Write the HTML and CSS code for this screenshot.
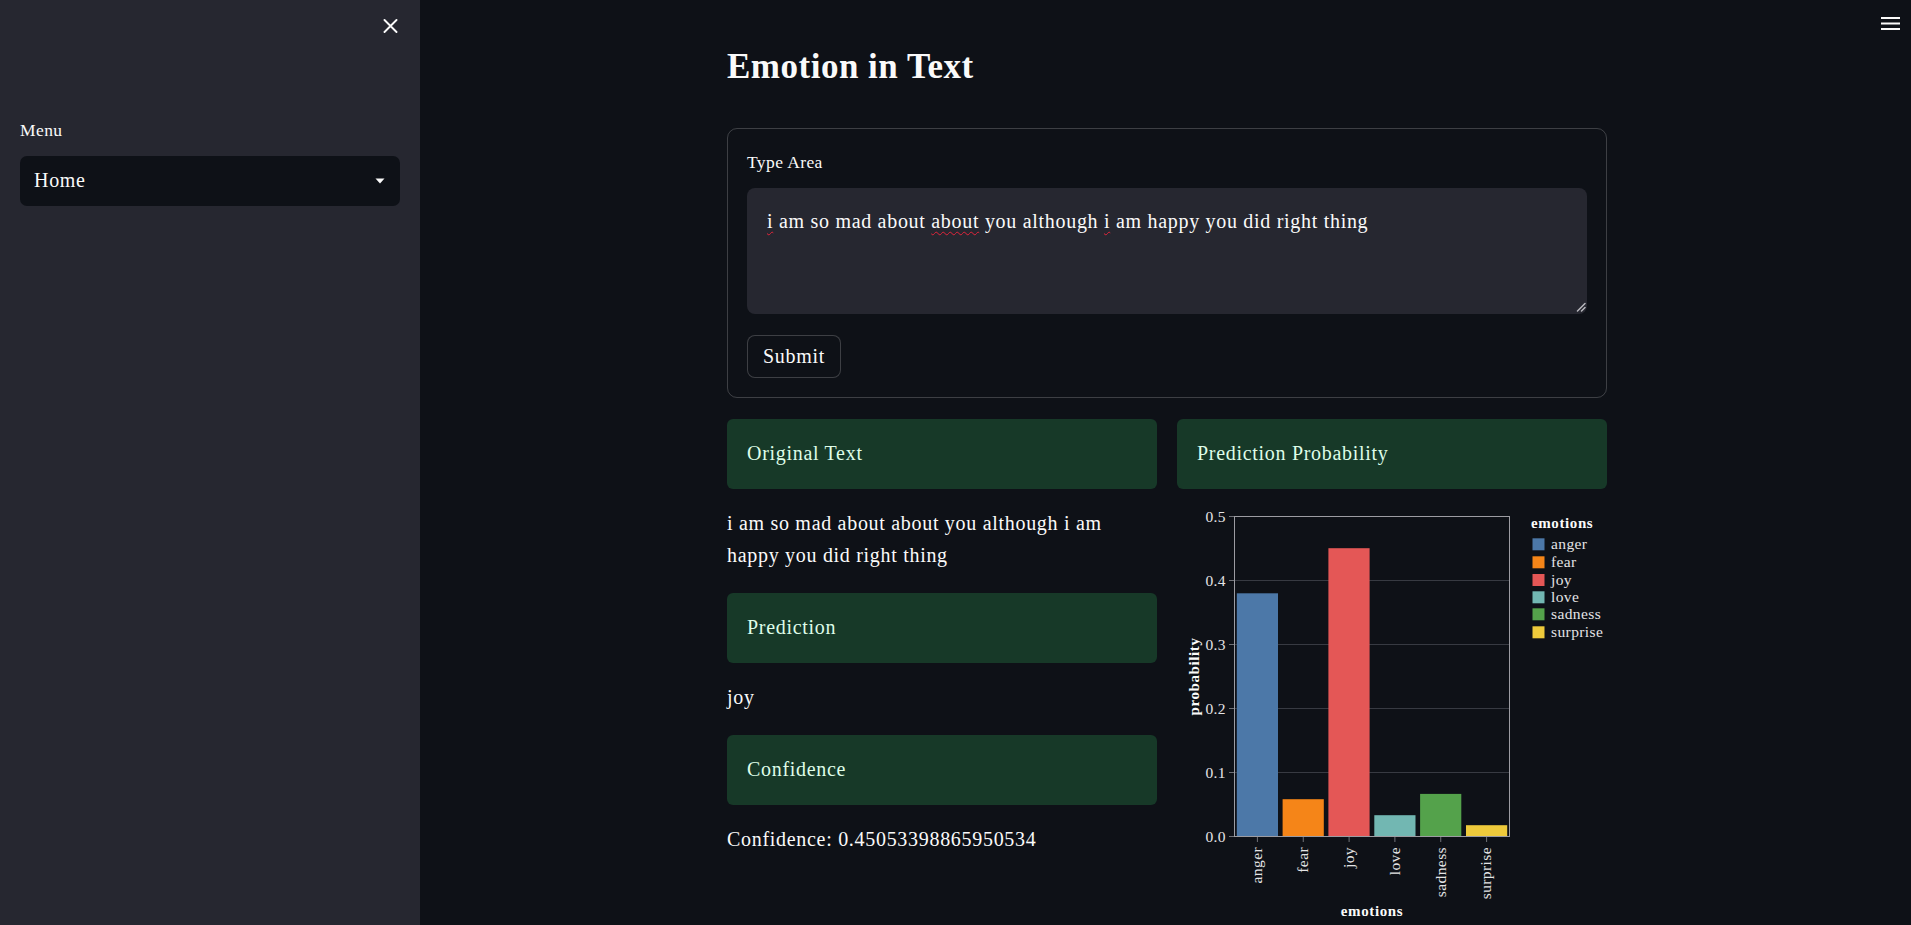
FILE: index.html
```html
<!DOCTYPE html>
<html lang="en">
<head>
<meta charset="utf-8">
<title>Emotion in Text</title>
<link rel="stylesheet" href="styles.css">
</head>
<body>
<aside class="sidebar">
  <div class="sidebar-top">
    <button class="close-btn" aria-label="Close sidebar">
      <svg width="15" height="14" viewBox="0 0 15 14"><path d="M1.5 1 L13.5 13 M13.5 1 L1.5 13" stroke="#fafafa" stroke-width="1.9" stroke-linecap="round"/></svg>
    </button>
  </div>
  <div class="widget-label">Menu</div>
  <div class="select">
    <span class="select-value">Home</span>
    <svg class="caret" width="10" height="6" viewBox="0 0 10 6"><path d="M0.5 0.5 L9.5 0.5 L5 5.5 Z" fill="#fafafa"/></svg>
  </div>
</aside>

<main class="main">
  <svg class="hamburger" width="19" height="14" viewBox="0 0 19 14"><rect x="0" y="0" width="19" height="2" fill="#fafafa"/><rect x="0" y="5.5" width="19" height="2" fill="#fafafa"/><rect x="0" y="11" width="19" height="2" fill="#fafafa"/></svg>
  <div class="content">
    <h1 class="title">Emotion in Text</h1>

    <form class="form" onsubmit="return false">
      <div class="widget-label form-label">Type Area</div>
      <div class="textarea"><span class="sp">i</span> am so mad about <span class="sp">about</span> you although <span class="sp">i</span> am happy you did right thing
        <svg class="grip" width="10" height="10" viewBox="0 0 10 10"><path d="M9 1.5 L1.5 9 M9 5.5 L5.5 9" stroke="#b8b8be" stroke-width="1.5" stroke-linecap="round"/></svg>
      </div>
      <button class="submit" type="button">Submit</button>
    </form>

    <div class="columns">
      <div class="col">
        <div class="box">Original Text</div>
        <p class="out">i am so mad about about you although i am happy you did right thing</p>
        <div class="box">Prediction</div>
        <p class="out">joy</p>
        <div class="box">Confidence</div>
        <p class="out">Confidence: 0.45053398865950534</p>
      </div>
      <div class="col">
        <div class="box">Prediction Probability</div>
        <svg class="chart" width="430" height="416" viewBox="0 0 430 416">
          <g stroke="#373a42" stroke-width="1">
            <line x1="57.5" x2="332.5" y1="71.5" y2="71.5"/>
            <line x1="57.5" x2="332.5" y1="135.5" y2="135.5"/>
            <line x1="57.5" x2="332.5" y1="199.5" y2="199.5"/>
            <line x1="57.5" x2="332.5" y1="263.5" y2="263.5"/>
          </g>
          <g stroke="#707278" stroke-width="1">
            <line x1="52" x2="57.5" y1="7.5" y2="7.5"/>
            <line x1="52" x2="57.5" y1="71.5" y2="71.5"/>
            <line x1="52" x2="57.5" y1="135.5" y2="135.5"/>
            <line x1="52" x2="57.5" y1="199.5" y2="199.5"/>
            <line x1="52" x2="57.5" y1="263.5" y2="263.5"/>
            <line x1="52" x2="57.5" y1="327.5" y2="327.5"/>
            <line x1="80.4" x2="80.4" y1="327.5" y2="333"/>
            <line x1="126.25" x2="126.25" y1="327.5" y2="333"/>
            <line x1="172.1" x2="172.1" y1="327.5" y2="333"/>
            <line x1="217.9" x2="217.9" y1="327.5" y2="333"/>
            <line x1="263.75" x2="263.75" y1="327.5" y2="333"/>
            <line x1="309.6" x2="309.6" y1="327.5" y2="333"/>
          </g>
          <rect x="59.8" y="84.3" width="41.2" height="243.2" fill="#4c78a8"/>
          <rect x="105.6" y="290.2" width="41.2" height="37.3" fill="#f58518"/>
          <rect x="151.4" y="39.2" width="41.2" height="288.3" fill="#e45756"/>
          <rect x="197.3" y="306.2" width="41.2" height="21.3" fill="#72b7b2"/>
          <rect x="243.1" y="284.9" width="41.2" height="42.6" fill="#54a24b"/>
          <rect x="289" y="316.2" width="41.2" height="11.3" fill="#eeca3b"/>
          <rect x="57.5" y="7.5" width="275" height="320" fill="none" stroke="#9c9ca2" stroke-width="1"/>
          <g class="tick-label" text-anchor="end">
            <text x="49" y="12.5">0.5</text>
            <text x="49" y="76.5">0.4</text>
            <text x="49" y="140.5">0.3</text>
            <text x="49" y="204.5">0.2</text>
            <text x="49" y="268.5">0.1</text>
            <text x="49" y="332.5">0.0</text>
          </g>
          <g class="tick-label" text-anchor="end">
            <text transform="translate(85.2 338) rotate(-90)">anger</text>
            <text transform="translate(131 338) rotate(-90)">fear</text>
            <text transform="translate(176.9 338) rotate(-90)">joy</text>
            <text transform="translate(222.7 338) rotate(-90)">love</text>
            <text transform="translate(268.5 338) rotate(-90)">sadness</text>
            <text transform="translate(314.4 338) rotate(-90)">surprise</text>
          </g>
          <text class="axis-title" text-anchor="middle" transform="translate(22 167.5) rotate(-90)">probability</text>
          <text class="axis-title" text-anchor="middle" x="195" y="407">emotions</text>
          <text class="axis-title" x="354" y="18.5">emotions</text>
          <rect x="355.5" y="29.3" width="12" height="12" fill="#4c78a8"/>
          <rect x="355.5" y="47.3" width="12" height="12" fill="#f58518"/>
          <rect x="355.5" y="65" width="12" height="12" fill="#e45756"/>
          <rect x="355.5" y="82.3" width="12" height="12" fill="#72b7b2"/>
          <rect x="355.5" y="99.3" width="12" height="12" fill="#54a24b"/>
          <rect x="355.5" y="117.3" width="12" height="12" fill="#eeca3b"/>
          <g class="tick-label">
            <text x="374" y="40">anger</text>
            <text x="374" y="58">fear</text>
            <text x="374" y="75.7">joy</text>
            <text x="374" y="93">love</text>
            <text x="374" y="110">sadness</text>
            <text x="374" y="128">surprise</text>
          </g>
        </svg>
      </div>
    </div>
  </div>
</main>
</body>
</html>
```

FILE: styles.css
```css
html, body {
  margin: 0;
  padding: 0;
}

body {
  display: flex;
  width: 1911px;
  height: 925px;
  overflow: hidden;
  background: #0e1117;
  color: #fafafa;
  font-family: "Liberation Serif", "Times New Roman", serif;
  font-size: 20px;
  letter-spacing: 0.7px;
}

.sidebar {
  width: 420px;
  flex-shrink: 0;
  box-sizing: border-box;
  background: #262730;
  padding: 0 20px;
  display: flex;
  flex-direction: column;
}

.sidebar-top {
  height: 52px;
  display: flex;
  justify-content: flex-end;
  align-items: center;
  padding-right: 2px;
}

.close-btn {
  background: none;
  border: none;
  padding: 0;
  width: 15px;
  height: 14px;
  display: flex;
  cursor: pointer;
}

.widget-label {
  font-size: 17.5px;
  line-height: 28px;
  letter-spacing: 0.4px;
}

.sidebar .widget-label {
  margin-top: 64px;
  margin-bottom: 1px;
}

.select {
  margin-top: 11px;
  height: 50px;
  box-sizing: border-box;
  background: #0e1117;
  border-radius: 7px;
  display: flex;
  align-items: center;
  justify-content: space-between;
  padding: 0 15px 2px 14px;
}

.select-value {
  font-size: 20px;
}

.caret {
  margin-top: 2px;
}

.main {
  flex: 1;
  position: relative;
  padding-left: 3px;
}

.hamburger {
  position: absolute;
  top: 17px;
  right: 11px;
}

.content {
  width: 880px;
  margin: 0 auto;
  padding-top: 46px;
}

.title {
  margin: 0 0 -1px;
  font-size: 35px;
  line-height: 42px;
  font-weight: 700;
  letter-spacing: 0.5px;
}

.form {
  margin: 41px 0 0;
  border: 1px solid rgba(250, 250, 250, 0.2);
  border-radius: 10px;
  padding: 19px;
}

.form-label {
  margin-bottom: 12px;
}

.textarea {
  position: relative;
  height: 126px;
  box-sizing: border-box;
  background: #262730;
  border-radius: 8px;
  padding: 17px 20px;
  line-height: 32px;
}

.sp {
  text-decoration: underline wavy #e0243a;
  text-decoration-thickness: 1px;
  text-underline-offset: 3px;
}

.grip {
  position: absolute;
  right: 1px;
  bottom: 2px;
}

.submit {
  margin-top: 21px;
  height: 43px;
  padding: 0 15px 1px;
  background: #0e1117;
  color: #fafafa;
  border: 1px solid rgba(250, 250, 250, 0.2);
  border-radius: 8px;
  font-family: inherit;
  font-size: 20px;
  letter-spacing: 0.7px;
}

.columns {
  margin-top: 21px;
  display: grid;
  grid-template-columns: 1fr 1fr;
  column-gap: 20px;
}

.col {
  display: flex;
  flex-direction: column;
  gap: 20px;
  min-width: 0;
}

.box {
  height: 70px;
  box-sizing: border-box;
  padding: 0 20px 2px;
  display: flex;
  align-items: center;
  background: #173928;
  color: #dffde9;
  border-radius: 6px;
}

.out {
  margin: -2px 0 2px;
  line-height: 32px;
}

.chart {
  display: block;
  overflow: visible;
}

.tick-label {
  font-size: 15.5px;
  fill: #e4e4e6;
  letter-spacing: 0.4px;
}

.axis-title {
  font-size: 15px;
  font-weight: 700;
  fill: #fafafa;
  letter-spacing: 0.6px;
}
```
